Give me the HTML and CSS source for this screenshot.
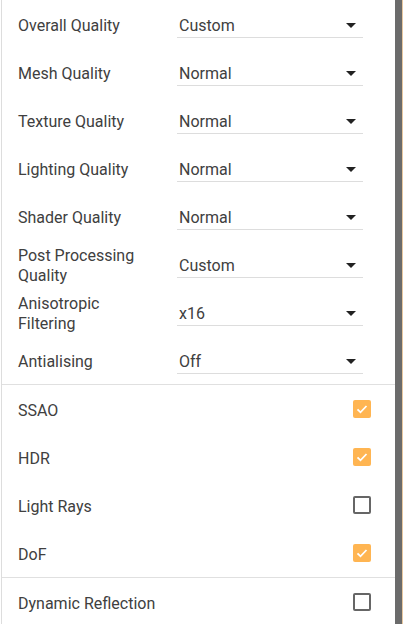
FILE: index.html
```html
<!DOCTYPE html>
<html>
<head>
<meta charset="utf-8">
<link rel="stylesheet" href="styles.css">
</head>
<body>
<div class="frame">
  <div class="panel">
    <div class="group">
      <div class="row"><span class="label">Overall Quality</span><div class="select"><span>Custom</span><i class="caret"></i></div></div>
      <div class="row"><span class="label">Mesh Quality</span><div class="select"><span>Normal</span><i class="caret"></i></div></div>
      <div class="row"><span class="label">Texture Quality</span><div class="select"><span>Normal</span><i class="caret"></i></div></div>
      <div class="row"><span class="label">Lighting Quality</span><div class="select"><span>Normal</span><i class="caret"></i></div></div>
      <div class="row"><span class="label">Shader Quality</span><div class="select"><span>Normal</span><i class="caret"></i></div></div>
      <div class="row"><span class="label">Post Processing Quality</span><div class="select"><span>Custom</span><i class="caret"></i></div></div>
      <div class="row"><span class="label">Anisotropic Filtering</span><div class="select"><span>x16</span><i class="caret"></i></div></div>
      <div class="row"><span class="label">Antialising</span><div class="select"><span>Off</span><i class="caret"></i></div></div>
    </div>
    <div class="group">
      <div class="row check-row"><span class="label">SSAO</span><span class="box on"><svg viewBox="0 0 18 18" width="18" height="18"><path d="M4.5 9.3l3 3 6-6.3" fill="none" stroke="#fff" stroke-width="1.8"/></svg></span></div>
      <div class="row check-row"><span class="label">HDR</span><span class="box on"><svg viewBox="0 0 18 18" width="18" height="18"><path d="M4.5 9.3l3 3 6-6.3" fill="none" stroke="#fff" stroke-width="1.8"/></svg></span></div>
      <div class="row check-row"><span class="label">Light Rays</span><span class="box"></span></div>
      <div class="row check-row"><span class="label">DoF</span><span class="box on"><svg viewBox="0 0 18 18" width="18" height="18"><path d="M4.5 9.3l3 3 6-6.3" fill="none" stroke="#fff" stroke-width="1.8"/></svg></span></div>
    </div>
    <div class="group">
      <div class="row check-row"><span class="label">Dynamic Reflection</span><span class="box"></span></div>
    </div>
  </div>
  <div class="scrollbar"></div>
</div>
</body>
</html>
```
FILE: styles.css
```css
html, body {
  margin: 0;
  padding: 0;
  background: #fff;
  overflow: hidden;
}
body {
  font-family: Roboto, "Noto Sans", sans-serif;
  font-size: 16px;
  color: #404040;
}
.frame {
  display: flex;
  height: 624px;
  padding-left: 1px;
}
.panel {
  width: 393px;
  border-left: 1px solid #ddd;
  background: #fff;
}
.group {
  border-bottom: 1px solid #e0e0e0;
}
.group:last-child {
  border-bottom: none;
}
.row {
  height: 48px;
  display: flex;
  align-items: center;
  padding-left: 16px;
  box-sizing: border-box;
  padding-top: 2px;
}
.label {
  width: 130px;
  line-height: 20px;
  margin-right: 29px;
  padding-top: 1px;
}
.select {
  width: 186px;
  height: 24px;
  border-bottom: 1px solid #ddd;
  display: flex;
  align-items: center;
  justify-content: space-between;
  padding-left: 2px;
  box-sizing: border-box;
  margin-top: 2px;
}
.select span {
  line-height: 20px;
  padding-top: 1px;
}
.caret {
  width: 0;
  height: 0;
  border-left: 5px solid transparent;
  border-right: 5px solid transparent;
  border-top: 5px solid #222;
  margin-right: 7px;
}
.check-row {
  justify-content: space-between;
  padding-right: 24px;
  padding-top: 0;
}
.check-row .label {
  width: auto;
  margin-right: 0;
  padding-top: 3px;
}
.box {
  width: 18px;
  height: 18px;
  box-sizing: border-box;
  border: 2px solid #666;
  border-radius: 2px;
  display: block;
}
.box.on {
  border: none;
  background: #ffb552;
}
.box svg {
  display: block;
}
.scrollbar {
  width: 7px;
  background: #6b6b6b;
  border-right: 1px solid #e8c8a0;
}
```
